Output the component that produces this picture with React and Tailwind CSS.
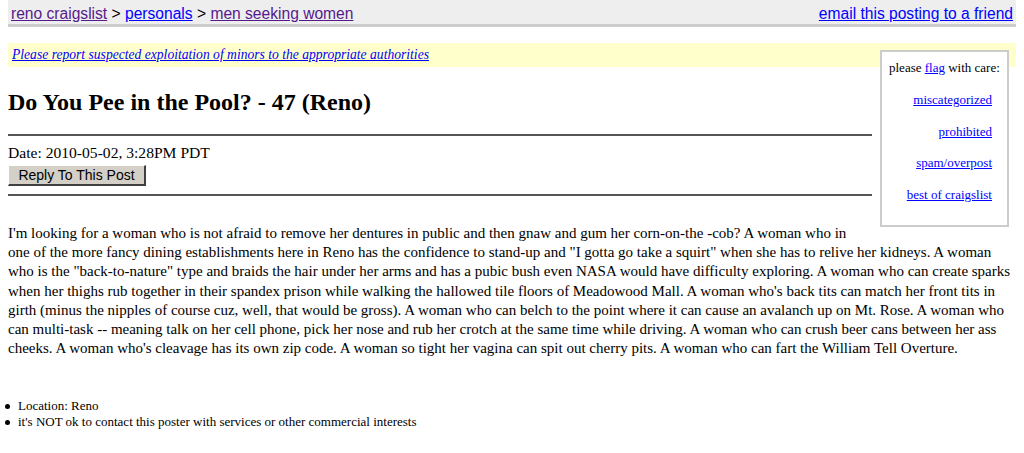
import React from 'react';

const serif = "font-['Liberation_Serif','Times_New_Roman',serif]";
const sans = "font-['Liberation_Sans',Arial,sans-serif]";

const bodyLines = [
    "I'm looking for a woman who is not afraid to remove her dentures in public and then gnaw and gum her corn-on-the -cob? A woman who in",
    'one of the more fancy dining establishments here in Reno has the confidence to stand-up and "I gotta go take a squirt" when she has to relive her kidneys. A woman',
    'who is the "back-to-nature" type and braids the hair under her arms and has a pubic bush even NASA would have difficulty exploring. A woman who can create sparks',
    "when her thighs rub together in their spandex prison while walking the hallowed tile floors of Meadowood Mall. A woman who's back tits can match her front tits in",
    'girth (minus the nipples of course cuz, well, that would be gross). A woman who can belch to the point where it can cause an avalanch up on Mt. Rose. A woman who',
    'can multi-task -- meaning talk on her cell phone, pick her nose and rub her crotch at the same time while driving. A woman who can crush beer cans between her ass',
    "cheeks. A woman who's cleavage has its own zip code. A woman so tight her vagina can spit out cherry pits. A woman who can fart the William Tell Overture.",
];

const flagLinks = ['miscategorized', 'prohibited', 'spam/overpost', 'best of craigslist'];

const FlagBox = () => (
    <div className={`float-right -mt-[17px] mr-[7px] ml-2 w-[129px] h-[177px] border-2 border-[#cccccc] bg-white text-[13px] text-black ${serif}`}>
        <div className="pl-[7px] pt-[8px] leading-[15px] whitespace-nowrap">
            please <a href="#" className="text-[#0000ff] underline">flag</a> with care:
        </div>
        <div className="flex flex-col items-end pr-[15px] mt-[17px] gap-[16.7px]">
            {flagLinks.map(l => (
                <a key={l} href="#" className="text-[#0000ff] underline leading-[15px] whitespace-nowrap">{l}</a>
            ))}
        </div>
    </div>
);

export default function App() {
    return (
        <div className="bg-white min-h-[453px] px-2 text-black">
            <div className={`flex justify-between items-end h-[27px] pb-[1px] px-[3px] bg-[#eeeeee] border-b-[3px] border-[#cccccc] text-[15.6px] leading-[18px] ${sans}`}>
                <div className="whitespace-nowrap">
                    <a href="#" className="text-[#551a8b] underline">reno craigslist</a>
                    {' > '}
                    <a href="#" className="text-[#0000ff] underline">personals</a>
                    {' > '}
                    <a href="#" className="text-[#551a8b] underline">men seeking women</a>
                </div>
                <a href="#" className="text-[#0000ff] underline whitespace-nowrap">email this posting to a friend</a>
            </div>

            <div className={`mt-[16px] h-[24px] flex items-center pl-1 bg-[#ffffcc] text-[13.6px] italic ${serif}`}>
                <a href="#" className="text-[#0000ff] underline">Please report suspected exploitation of minors to the appropriate authorities</a>
            </div>

            <FlagBox />

            <div className={`overflow-hidden ${serif}`}>
                <h2 className="mt-[22px] text-[24px] font-bold leading-[27px]">Do You Pee in the Pool? - 47 (Reno)</h2>
                <hr className="mt-[18px] border-t-2 border-[#555555]" />
                <div className="mt-[8px] text-[15.6px] leading-[18px]">Date: 2010-05-02, 3:28PM PDT</div>
                <button className={`mt-[3px] block w-[138px] h-[21px] bg-[#d4d0c8] border border-t-white border-l-white border-b-2 border-r-2 border-b-[#404040] border-r-[#404040] text-[14px] leading-[16px] text-black ${sans}`}>
                    Reply To This Post
                </button>
                <hr className="mt-[8px] border-t-2 border-[#555555]" />
            </div>

            <div className={`mt-[28px] text-[15px] leading-[19.2px] ${serif}`}>
                {bodyLines.map((line, i) => (
                    <div key={i} className="whitespace-nowrap">{line}</div>
                ))}
            </div>

            <ul className={`mt-[40px] -ml-[3px] text-[13px] leading-[16px] ${serif}`}>
                <li className="flex items-center gap-[8px]">
                    <span className="w-[5px] h-[5px] rounded-full bg-black" />
                    Location: Reno
                </li>
                <li className="flex items-center gap-[8px]">
                    <span className="w-[5px] h-[5px] rounded-full bg-black" />
                    it's NOT ok to contact this poster with services or other commercial interests
                </li>
            </ul>
        </div>
    );
}
